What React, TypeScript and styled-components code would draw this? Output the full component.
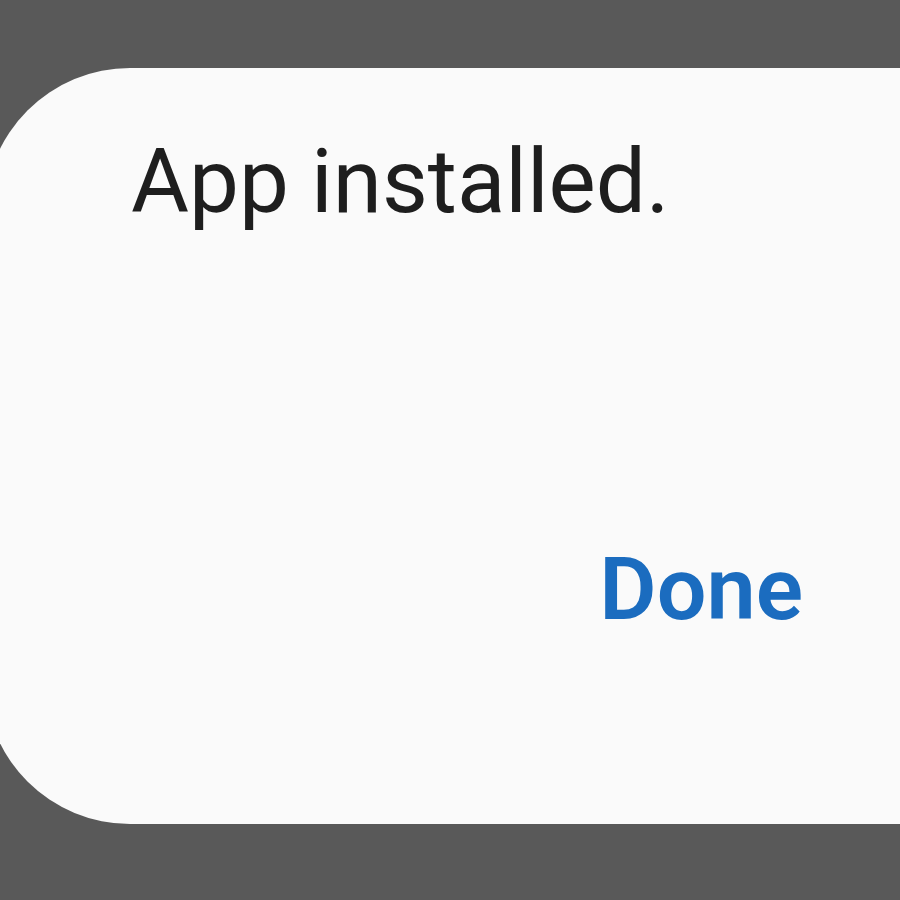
import React from "react";
import styled, { createGlobalStyle } from "styled-components";

const Global = createGlobalStyle`
  html, body {
    margin: 0;
    padding: 0;
    background: #595959;
    overflow: hidden;
  }
`;

const Screen = styled.div`
  width: 900px;
  height: 900px;
  padding-top: 68px;
  box-sizing: border-box;
  background: #595959;
  overflow: hidden;
`;

const Dialog = styled.div`
  margin-left: -15px;
  width: 1015px;
  height: 756px;
  box-sizing: border-box;
  background: #fafafa;
  border-radius: 145px 0 0 145px;
  display: flex;
  flex-direction: column;
  padding: 71px 197px 192px 146px;
  font-family: Roboto, "Noto Sans", sans-serif;
`;

const Message = styled.div`
  font-size: 89px;
  line-height: 86px;
  font-weight: 400;
  color: #1e1e1e;
`;

const Actions = styled.div`
  margin-top: auto;
  display: flex;
  justify-content: flex-end;
`;

const ActionButton = styled.button`
  border: none;
  background: none;
  padding: 0;
  margin: 0;
  font-family: Roboto, "Noto Sans", sans-serif;
  font-size: 88px;
  line-height: 86px;
  font-weight: 600;
  color: #1b6cbf;
  cursor: pointer;
`;

export default function App() {
  return (
    <>
      <Global />
      <Screen>
        <Dialog>
          <Message>App installed.</Message>
          <Actions>
            <ActionButton>Done</ActionButton>
          </Actions>
        </Dialog>
      </Screen>
    </>
  );
}
